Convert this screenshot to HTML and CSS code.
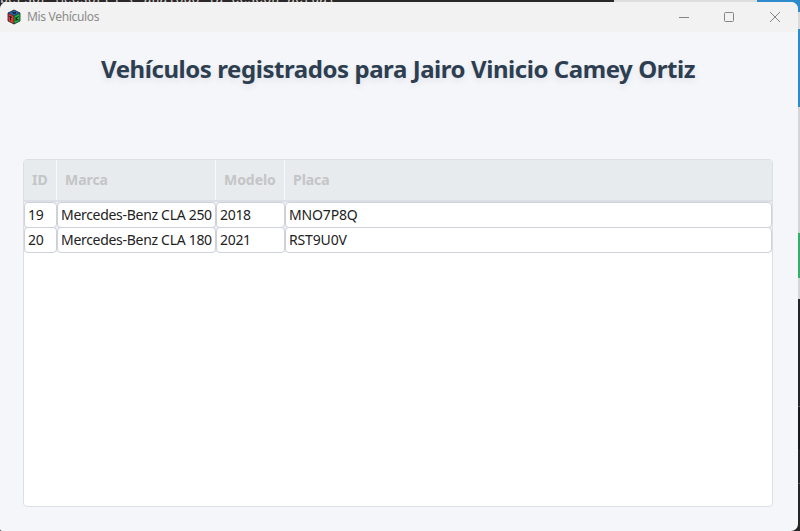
FILE: index.html
```html
<!DOCTYPE html>
<html lang="es">
<head>
<meta charset="utf-8">
<title>Mis Vehículos</title>
<link rel="stylesheet" href="styles.css">
</head>
<body>
<div class="code-strip">persor_Mecsor() { analogo la cescon actual</div>
<div class="side-strip"></div>
<main class="window">
  <header class="titlebar">
    <svg class="app-icon" width="14" height="16" viewBox="0 0 14 16">
      <path fill="#2865b8" d="M7 1 13 4 7 7 1 4z"/>
      <path fill="#df3a35" d="M1 4 7 7v8L1 12z"/>
      <path fill="#20b838" d="M13 4 7 7v8l6-3z"/>
      <path fill="none" stroke="#182126" stroke-width=".8" d="M7 1 13 4v8l-6 3-6-3V4zM1 4l6 3 6-3M7 7v8"/>
      <path fill="none" stroke="#182126" d="M5 3l4 1.5M9 3 6 5M2 7l3 1.5M3.5 7.5v4M9 8v4M11.500 7 9 10l2.500 1"/>
    </svg>
    <span class="window-name">Mis Vehículos</span>
    <svg class="controls" width="106" height="14" viewBox="0 0 106 14" fill="none" stroke="#858585">
      <path d="M1 7.500h10"/>
      <rect x="46.500" y="2.500" width="9" height="9" rx="1"/>
      <path d="m92 2 10 10M102 2 92 12"/>
    </svg>
  </header>
  <h1>Vehículos registrados para Jairo Vinicio Camey Ortiz</h1>
  <section class="table">
    <div class="row head"><div>ID</div><div>Marca</div><div>Modelo</div><div>Placa</div></div>
    <div class="row"><div>19</div><div>Mercedes-Benz CLA 250</div><div>2018</div><div>MNO7P8Q</div></div>
    <div class="row"><div>20</div><div>Mercedes-Benz CLA 180</div><div>2021</div><div>RST9U0V</div></div>
  </section>
</main>
</body>
</html>
```
FILE: styles.css
```css
* { box-sizing: border-box; }
body {
  margin: 0;
  width: 800px;
  height: 531px;
  position: relative;
  overflow: hidden;
  background: linear-gradient(90deg, #2b2829 614px, #dedede 614px 757px, #2d8acb 757px);
  font-family: "Noto Sans", sans-serif;
}
body::before { content: ""; display: table; }
.code-strip {
  position: absolute;
  top: 0;
  left: 0;
  width: 614px;
  height: 3px;
  overflow: hidden;
  font: 13.3px/0 "Liberation Mono", monospace;
  color: #d8d4d0;
  white-space: pre;
}
.side-strip {
  position: absolute;
  top: 0;
  right: 0;
  width: 12px;
  height: 531px;
  background: linear-gradient(#2d8acb 12px, #dadada 12px 29px, #2d8acb 29px 107px, #d5d5d5 107px 233px, #38ad6b 233px 278px, #d5d5d5 278px 299px, #252525 299px 406px, #555 406px 407px, #191919 407px 449px, #252525 449px 483px, #555 483px 484px, #252525 484px);
}
.window {
  position: relative;
  width: 798px;
  height: 529px;
  margin-top: 2px;
  display: flex;
  flex-direction: column;
  overflow: hidden;
  background: #f5f6fa;
  border-radius: 7px 7px 7px 2px;
}
.titlebar {
  flex: 0 0 30px;
  display: flex;
  align-items: center;
  padding: 0 14px 1px 7px;
  background: #f2f2f2;
}
.window-name {
  margin-left: 6px;
  padding-top: 1px;
  color: #8b8b8b;
  font-size: 12px;
  line-height: 16px;
  letter-spacing: -0.32px;
}
.controls { margin-left: auto; }
h1 {
  margin: 21px 0 0;
  padding-left: 101px;
  height: 32px;
  color: #2c3e50;
  font-size: 24px;
  line-height: 32px;
  letter-spacing: -0.44px;
  white-space: nowrap;
  text-shadow: 0 3px 6px rgba(44, 62, 80, .1);
}
.table {
  width: 750px;
  height: 348px;
  margin: 74px 0 0 23px;
  background: #fff;
  border: 1px solid #dcdfe5;
  border-radius: 4px;
  overflow: hidden;
}
.row {
  display: grid;
  grid-template-columns: 33px 159px 69px 487px;
  height: 25px;
  background: #eceff3;
  color: #222;
  font-size: 14px;
  line-height: 24px;
  white-space: nowrap;
}
.row > div {
  border: 1px solid #ced1da;
  border-radius: 4px;
  background: #fff;
  padding-left: 3px;
  letter-spacing: -0.3px;
}
.row:not(.head) > div:last-child { letter-spacing: -0.15px; }
.head {
  height: 42px;
  background: #e9ecef;
  border-bottom: 2px solid #dcdfe5;
  color: #c3c5c7;
  font-weight: bold;
  line-height: 40px;
}
.head > div {
  border: 0;
  border-right: 1px solid #f7f8fa;
  border-radius: 0;
  background: #e8ebed;
  padding-left: 8px;
  letter-spacing: -0.05px;
}
.head > div:last-child { border-right: 0; }
```
